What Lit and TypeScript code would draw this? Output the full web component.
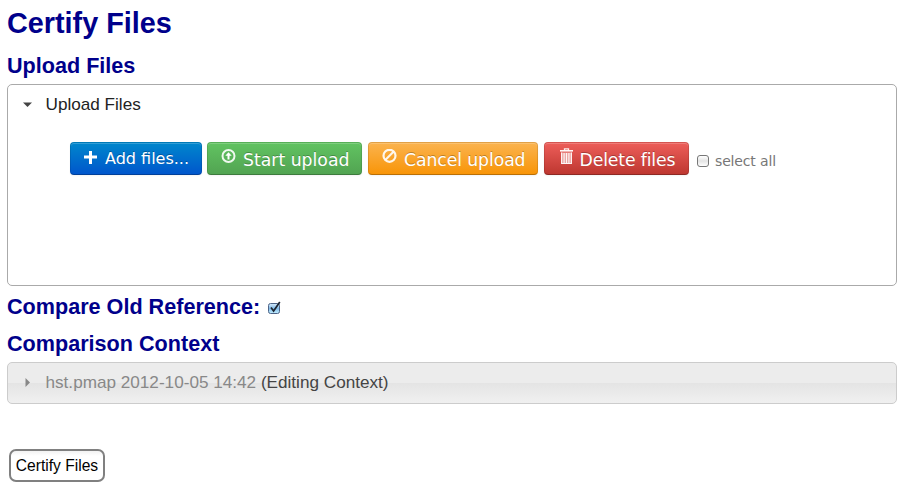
import { LitElement, html, css } from "lit";
import { customElement } from "lit/decorators.js";

const plus = html`<svg class="icon" width="14" height="14" viewBox="0 0 14 14"><path fill="#fff" d="M5 1h3v4.500h5v3H8V14H5V8.500H0v-3h5z"/></svg>`;
const upload = html`<svg class="icon" width="15" height="15" viewBox="0 0 15 15"><circle cx="7.500" cy="7" r="6" fill="none" stroke="#fff" stroke-width="2" opacity=".9"/><path fill="#fff" d="M7.500 3.200l3.200 3.600H8.500v3.700h-2V6.800H4.300z"/></svg>`;
const ban = html`<svg class="icon" width="15" height="15" viewBox="0 0 15 15"><circle cx="7.500" cy="6.800" r="6" fill="none" stroke="#fff" stroke-width="2.200" opacity=".9"/><path stroke="#fff" stroke-width="2.200" opacity=".9" d="M3.500 10.800L11.500 2.800"/></svg>`;
const trash = html`<svg class="icon trash" width="14" height="17" viewBox="0 0 14 17"><path fill="none" stroke="#fff" stroke-width="1.300" opacity=".9" d="M4.500 2.500V.9h4v1.600"/><path fill="#fff" opacity=".95" d="M0 2h13v1.600H0z"/><path fill="#fff" opacity=".5" d="M1 4.500h11V16H1z"/><path fill="none" stroke="#fff" stroke-width="1.100" opacity=".9" d="M1.600 4.500v11h9.800v-11M4.100 5v10M6.500 5v10M8.900 5v10"/></svg>`;

@customElement("app-root")
export class AppRoot extends LitElement {
  static styles = css`
    :host {
      display: block;
      box-sizing: border-box;
      height: 500px;
      padding: 5px 13px 0 7px;
      overflow: hidden;
      background: #fff;
      color: #222;
      font-family: "Liberation Sans", Arial, sans-serif;
      white-space: nowrap;
    }
    h1, h2 { margin: 0; color: #00008b; font-weight: bold; }
    h1 { font-size: 28.8px; line-height: 36px; }
    h2 { font-size: 21.6px; line-height: 24px; }
    .upload-title { margin-top: 13px; }
    .panel {
      box-sizing: border-box;
      height: 202px;
      margin-top: 6px;
      border: 1px solid #aaa;
      border-radius: 5px;
    }
    .panel-head { display: flex; align-items: center; height: 38px; padding-left: 14.5px; font-size: 17.15px; }
    .arrow { width: 9px; height: 9px; margin-right: 14px; flex: none; }
    .actions { display: flex; align-items: flex-start; margin: 19px 0 0 62px; font-family: "DejaVu Sans", Verdana, sans-serif; }
    .btn {
      display: flex;
      align-items: flex-start;
      box-sizing: border-box;
      height: 33px;
      margin: 0 6px 0 0;
      padding: 0 0 0 13px;
      border: 1px solid;
      border-color: rgba(0,0,0,.1) rgba(0,0,0,.1) rgba(0,0,0,.25);
      border-radius: 4px;
      color: #fff;
      font: 17.28px/35px "DejaVu Sans", Verdana, sans-serif;
      text-shadow: 0 -1px 0 rgba(0,0,0,.25);
      box-shadow: inset 0 1px 0 rgba(255,255,255,.2), 0 1px 2px rgba(0,0,0,.05);
      background-origin: border-box;
    }
    .icon { flex: none; margin: 6px 7px 0 0; }
    .trash { margin: 5px 6px 0 2px; }
    .add { width: 132px; margin-right: 5px; background-image: linear-gradient(#08c, #05c); font-size: 16px; line-height: 31px; }
    .add .icon { margin-top: 7px; }
    .start { width: 155px; background-image: linear-gradient(#62c462, #51a351); }
    .cancel { width: 170px; background-image: linear-gradient(#fbb450, #f89406); letter-spacing: -.1px; }
    .delete { width: 145px; background-image: linear-gradient(#ee5f5b, #bd362f); letter-spacing: -.14px; }
    .delete .icon { margin-left: 1.500px; }
    .select { display: flex; align-items: center; margin: 10px 0 0 2px; color: #777; font-size: 14px; line-height: 18px; letter-spacing: -.15px; }
    .box { box-sizing: border-box; width: 12px; height: 12px; margin-right: 6px; border: 1px solid #777; border-radius: 3px; background: linear-gradient(#fff, #e4e4e4 50%, #fff); }
    .compare { display: flex; align-items: center; margin-top: 9px; }
    .check { margin: 2px 0 0 7px; }
    .context-title { margin-top: 13px; }
    .context {
      display: flex;
      align-items: center;
      box-sizing: border-box;
      height: 42px;
      margin-top: 6px;
      padding: 0 0 2px 14.5px;
      border: 1px solid #ccc;
      border-radius: 5px;
      background: linear-gradient(#ececec 0 50%, #e4e4e4 50%, #f0f0f0);
      color: #888;
      font-size: 17.15px;
    }
    .note { color: #444; }
    .certify {
      display: block;
      box-sizing: border-box;
      width: 96px;
      height: 33px;
      margin: 45px 0 0 2px;
      padding: 0;
      border: 2px solid #808080;
      border-radius: 7px;
      background: linear-gradient(#f2f2f2, #fff 5px);
      color: #000;
      font: 15.6px/29px "Liberation Sans", Arial, sans-serif;
    }
  `;

  render() {
    return html`
      <h1>Certify Files</h1>
      <h2 class="upload-title">Upload Files</h2>
      <section class="panel">
        <div class="panel-head">
          <svg class="arrow" viewBox="0 0 9 9"><path fill="#444" d="M0 2.500h9L4.500 7z"/></svg>
          <span>Upload Files</span>
        </div>
        <div class="actions">
          <button class="btn add">${plus}<span>Add files...</span></button>
          <button class="btn start">${upload}<span>Start upload</span></button>
          <button class="btn cancel">${ban}<span>Cancel upload</span></button>
          <button class="btn delete">${trash}<span>Delete files</span></button>
          <label class="select"><span class="box"></span><span>select all</span></label>
        </div>
      </section>
      <h2 class="compare">
        <span>Compare Old Reference:</span>
        <svg class="check" width="14" height="14" viewBox="0 0 14 14">
          <defs><linearGradient id="blue" x2="0" y2="1"><stop stop-color="#d8ecfb"/><stop offset=".5" stop-color="#83bbe8"/><stop offset="1" stop-color="#c2efff"/></linearGradient></defs>
          <rect x="1.500" y="2.500" width="11" height="10" rx="2" fill="url(#blue)" stroke="#4d6488"/>
          <path d="M4 6.500l2.600 3.500L12.800 1" fill="none" stroke="#1b2430" stroke-width="1.700"/>
        </svg>
      </h2>
      <h2 class="context-title">Comparison Context</h2>
      <section class="context">
        <svg class="arrow" viewBox="0 0 9 9"><path fill="#888" d="M2.500 0v9L7 4.500z"/></svg>
        <span>hst.pmap 2012-10-05 14:42 <span class="note">(Editing Context)</span></span>
      </section>
      <button class="certify">Certify Files</button>
    `;
  }
}
